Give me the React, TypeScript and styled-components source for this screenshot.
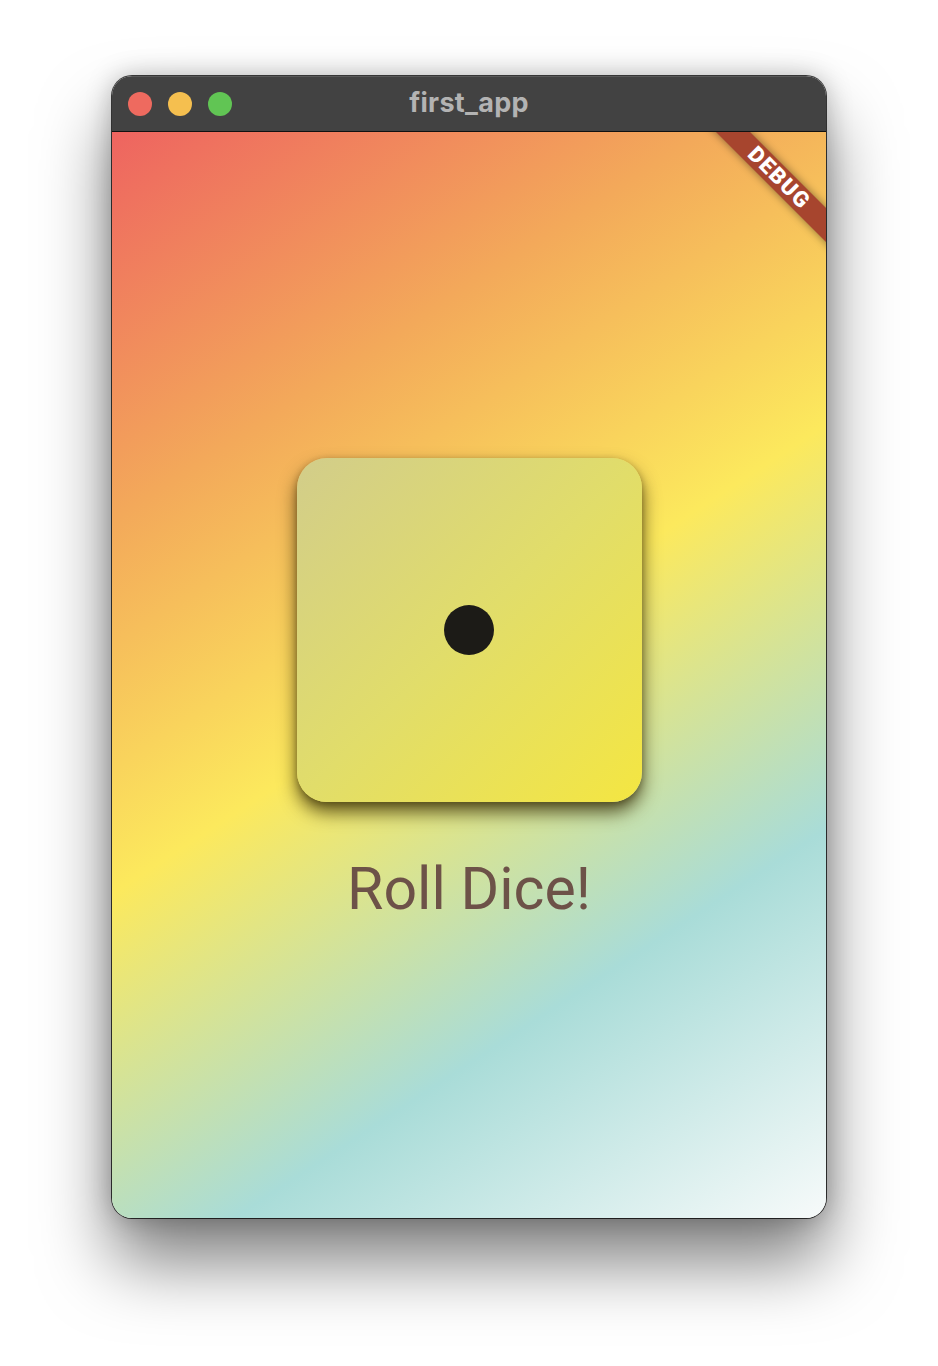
import styled, { createGlobalStyle } from 'styled-components';

const GlobalStyle = createGlobalStyle`
  html, body {
    margin: 0;
    padding: 0;
    background: #ffffff;
  }
  body {
    font-family: Roboto, "Liberation Sans", sans-serif;
  }
`;

const Page = styled.div`
  width: 938px;
  height: 1366px;
  display: flex;
  justify-content: center;
  align-items: flex-start;
  padding-top: 76px;
  box-sizing: border-box;
`;

const Window = styled.div`
  width: 714px;
  height: 1142px;
  display: flex;
  flex-direction: column;
  border-radius: 20px;
  overflow: hidden;
  box-shadow:
    0 0 0 1px rgba(0, 0, 0, 0.75),
    0 44px 70px rgba(0, 0, 0, 0.5),
    0 0 26px rgba(0, 0, 0, 0.25);
`;

const TitleBar = styled.div`
  height: 56px;
  flex: none;
  display: grid;
  grid-template-columns: 1fr auto 1fr;
  align-items: center;
  background: #424242;
  border-bottom: 1px solid #111111;
  box-shadow: inset 0 1px 0 rgba(255, 255, 255, 0.12);
  box-sizing: border-box;
`;

const Lights = styled.div`
  display: flex;
  gap: 16px;
  padding-left: 16px;
`;

const Light = styled.span<{ $color: string }>`
  width: 24px;
  height: 24px;
  border-radius: 50%;
  background: ${(p) => p.$color};
`;

const Title = styled.div`
  font-family: Inter, "Noto Sans", sans-serif;
  font-weight: 700;
  font-size: 27px;
  line-height: 1;
  color: #b3b3b3;
  letter-spacing: 0.3px;
  margin-top: -3px;
`;

const Content = styled.div`
  position: relative;
  flex: 1;
  overflow: hidden;
  display: flex;
  flex-direction: column;
  align-items: center;
  padding-top: 326px;
  box-sizing: border-box;
  background: linear-gradient(
    146.7deg,
    #ee6460 0%,
    #f3a95a 25%,
    #fce95d 49%,
    #a9dcd8 75%,
    #f7fafa 100%
  );
`;

const Dice = styled.div`
  width: 345px;
  height: 344px;
  border-radius: 30px;
  display: flex;
  align-items: center;
  justify-content: center;
  background: linear-gradient(135deg, #d2cd8a 0%, #e1dd6a 50%, #f4e642 100%);
  box-shadow:
    0 10px 18px rgba(45, 35, 0, 0.75),
    0 2px 6px rgba(45, 35, 0, 0.3);
`;

const Pip = styled.span`
  width: 50px;
  height: 50px;
  border-radius: 50%;
  background: #1c1b17;
`;

const RollButton = styled.button`
  margin-top: 52px;
  padding: 0;
  border: none;
  background: none;
  font-family: Roboto, "Liberation Sans", sans-serif;
  font-size: 59px;
  font-weight: 400;
  color: #6d5248;
  cursor: pointer;
`;

const Banner = styled.div`
  position: absolute;
  left: 557px;
  top: 34px;
  width: 220px;
  height: 24px;
  display: flex;
  align-items: center;
  justify-content: center;
  transform: rotate(45deg);
  background: #a7452e;
  box-shadow: 0 0 8px rgba(0, 0, 0, 0.45);
  color: #ffffff;
  font-family: Roboto, "Liberation Sans", sans-serif;
  font-weight: 900;
  font-size: 22px;
  letter-spacing: 1.5px;
  line-height: 1;
`;

export default function App() {
  return (
    <>
      <GlobalStyle />
      <Page>
        <Window>
          <TitleBar>
            <Lights>
              <Light $color="#ee6a5f" />
              <Light $color="#f5bf4f" />
              <Light $color="#61c554" />
            </Lights>
            <Title>first_app</Title>
            <div />
          </TitleBar>
          <Content>
            <Dice>
              <Pip />
            </Dice>
            <RollButton>Roll Dice!</RollButton>
            <Banner>DEBUG</Banner>
          </Content>
        </Window>
      </Page>
    </>
  );
}
